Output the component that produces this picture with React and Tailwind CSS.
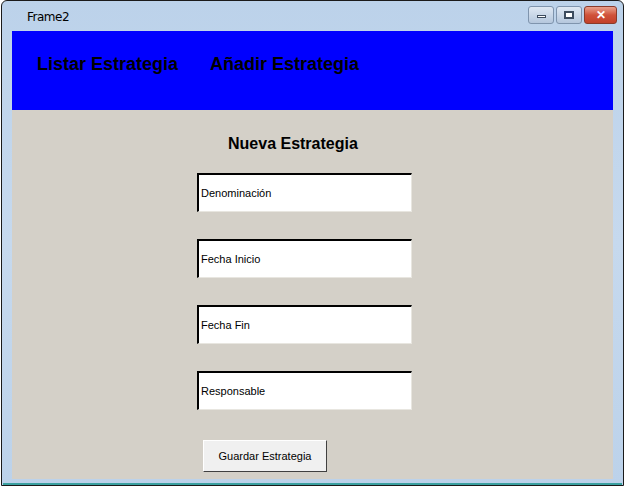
import React from "react";

const Field = ({ label }) => (
  <div className="w-[215px] h-[39px] bg-white border-t-2 border-l-2 border-t-black border-l-black border-b border-r border-b-[#e8e6e0] border-r-[#e8e6e0] flex items-center pl-[2px] text-[11px] text-black">
    {label}
  </div>
);

const App = () => {
  return (
    <div className="w-[627px] h-[488px] bg-white font-['Liberation_Sans',Arial,sans-serif]">
      <div className="w-[623px] h-[486px] ml-[1px] border border-[#1a1a1a] rounded-t-[6px] bg-gradient-to-b from-[#bcd2ea] via-[#c6d9ee] to-[#bcd2ea] flex flex-col">
        {/* title bar */}
        <div className="h-[30px] flex items-start justify-between pl-[25px] pr-[6px]">
          <span className="text-[12px] text-black mt-[7px] font-['DejaVu_Sans',sans-serif] tracking-[-0.5px]">Frame2</span>
          <div className="flex gap-[2px] mt-[5px]">
            <div className="w-[26px] h-[18px] rounded-[3px] border border-[#7f94ad] bg-gradient-to-b from-[#dfe8f3] to-[#b5c7dd] flex items-end justify-center pb-[5px]">
              <div className="w-[9px] h-[3px] border border-[#3c4b5e] bg-white" />
            </div>
            <div className="w-[26px] h-[18px] rounded-[3px] border border-[#7f94ad] bg-gradient-to-b from-[#dfe8f3] to-[#b5c7dd] flex items-center justify-center">
              <div className="w-[10px] h-[8px] border-2 border-[#3c4b5e] bg-white" />
            </div>
            <div className="w-[33px] h-[18px] rounded-[3px] border border-[#8a3a2a] bg-gradient-to-b from-[#e8a08c] via-[#d0523a] to-[#c2402a] flex items-center justify-center text-white text-[12px] font-bold leading-none">
              ✕
            </div>
          </div>
        </div>
        {/* client area */}
        <div className="mx-[10px] flex-1 flex flex-col bg-[#d4d0c8] mb-[4px]">
          <div className="h-[79px] bg-[#0000ff] flex items-center gap-[32px] pl-[25px] pb-[12px]">
            <span className="text-[18px] font-bold text-black">Listar Estrategia</span>
            <span className="text-[18px] font-bold text-black">Añadir Estrategia</span>
          </div>
          <div className="flex flex-col">
            <h1 className="mt-[22px] pl-[216px] text-[16px] font-bold text-black">Nueva Estrategia</h1>
            <div className="mt-[17px] pl-[185px] flex flex-col gap-[27px]">
              <Field label="Denominación" />
              <Field label="Fecha Inicio" />
              <Field label="Fecha Fin" />
              <Field label="Responsable" />
            </div>
            <div className="mt-[30px] pl-[191px]">
              <button className="w-[124px] h-[32px] bg-[#f0f0f0] border border-t-white border-l-white border-r-[#404040] border-b-[#404040] text-[11px] text-black">
                Guardar Estrategia
              </button>
            </div>
          </div>
        </div>
        <div className="h-[2px] bg-[#3aa0a0] mx-[1px]" />
      </div>
    </div>
  );
};

export default App;
